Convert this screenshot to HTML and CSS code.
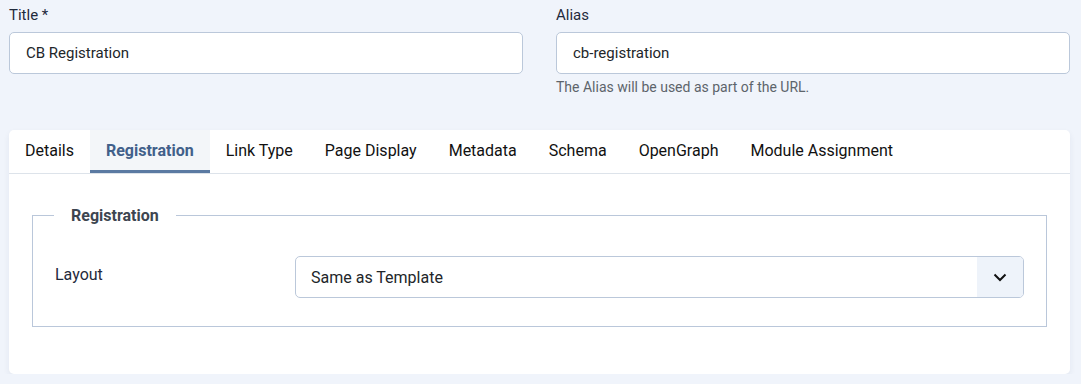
FILE: index.html
```html
<!DOCTYPE html>
<html lang="en">
<head>
  <meta charset="UTF-8" />
  <meta name="viewport" content="width=device-width, initial-scale=1.0"/>
  <title>Edit Menu Item</title>
  <link rel="stylesheet" href="styles.css">
</head>
<body>
  <div class="page">
    <div class="title-row">
      <div class="field">
        <label class="field-label" for="jform_title">Title *</label>
        <input class="form-control" id="jform_title" type="text" value="CB Registration">
      </div>
      <div class="field">
        <label class="field-label" for="jform_alias">Alias</label>
        <input class="form-control" id="jform_alias" type="text" value="cb-registration">
        <div class="field-help">The Alias will be used as part of the URL.</div>
      </div>
    </div>

    <div class="card">
      <div class="tabs">
        <button class="tab">Details</button>
        <button class="tab active">Registration</button>
        <button class="tab">Link Type</button>
        <button class="tab">Page Display</button>
        <button class="tab">Metadata</button>
        <button class="tab">Schema</button>
        <button class="tab">OpenGraph</button>
        <button class="tab">Module Assignment</button>
      </div>
      <div class="tab-body">
        <fieldset class="options">
          <legend>Registration</legend>
          <div class="control-group">
            <label class="control-label" for="jform_layout">Layout</label>
            <div class="select">
              <span class="select-value">Same as Template</span>
              <span class="select-arrow">
                <svg width="16" height="16" viewBox="0 0 16 16"><path d="M2.5 5.5 8 11l5.5-5.5" fill="none" stroke="#111" stroke-width="2"/></svg>
              </span>
            </div>
          </div>
        </fieldset>
      </div>
    </div>
  </div>
</body>
</html>
```

FILE: styles.css
```css
body {
  margin: 0;
  background: #f0f4fb;
  font-family: Roboto, "Liberation Sans", sans-serif;
  color: #22262a;
}
.page {
  padding: 4px 11px 0 9px;
}
.title-row {
  display: grid;
  grid-template-columns: 1fr 1fr;
  gap: 33px;
  height: 126px;
}
.field-label {
  display: block;
  font-size: 15px;
  line-height: 22px;
  color: #1f2a3c;
  margin-bottom: 6px;
}
.form-control {
  display: block;
  box-sizing: border-box;
  width: 100%;
  height: 42px;
  padding: 0 16px;
  border: 1px solid #bbc8da;
  border-radius: 5px;
  background: #fff;
  font-family: inherit;
  font-size: 15px;
  color: #22262a;
}
.field-help {
  margin-top: 5px;
  font-size: 14px;
  color: #5d646b;
}
.card {
  background: #fff;
  border-radius: 5px;
  box-shadow: 0 3px 6px rgba(40, 60, 100, 0.07);
}
.tabs {
  display: flex;
  border-bottom: 1px solid #dde3ea;
}
.tab {
  border: 0;
  background: none;
  padding: 10px 16px 8px;
  border-bottom: 3px solid transparent;
  font-family: inherit;
  font-size: 16px;
  line-height: 22px;
  color: #111;
  cursor: pointer;
}
.tab.active {
  background: #f3f6f9;
  border-bottom-color: #5b7aa2;
  color: #41608a;
  font-weight: 700;
}
.tab-body {
  padding: 32px 23px 47px;
}
.options {
  margin: 0;
  padding: 0 22px 28px;
  border: 1px solid #bac7da;
}
.options legend {
  margin-left: -1px;
  padding: 0 17px;
  font-size: 16px;
  font-weight: 700;
  color: #3d4550;
}
.control-group {
  display: flex;
  align-items: flex-start;
  padding-top: 31px;
}
.control-label {
  width: 240px;
  flex-shrink: 0;
  padding-top: 8px;
  font-size: 16px;
  line-height: 22px;
  color: #1f2a3c;
}
.select {
  flex: 1;
  display: flex;
  align-items: stretch;
  height: 42px;
  box-sizing: border-box;
  border: 1px solid #bbc8da;
  border-radius: 5px;
  overflow: hidden;
}
.select-value {
  flex: 1;
  display: flex;
  align-items: center;
  padding: 0 15px;
  font-size: 16px;
}
.select-arrow {
  width: 46px;
  display: flex;
  align-items: center;
  justify-content: center;
  background: #eef3fa;
}
```
